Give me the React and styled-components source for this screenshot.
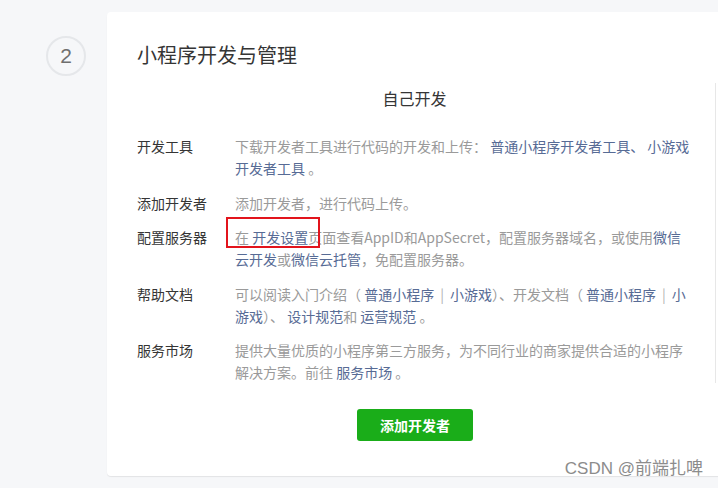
import styled, { createGlobalStyle } from 'styled-components';

const GlobalStyle = createGlobalStyle`
  html, body {
    margin: 0;
    padding: 0;
    background: #f6f7f9;
  }
  body {
    font-family: "Noto Sans CJK SC", "Liberation Sans", sans-serif;
    color: #353535;
  }
`;

const Page = styled.div`
  position: relative;
  display: flex;
  width: 718px;
  height: 488px;
  padding-top: 12px;
  box-sizing: border-box;
  overflow: hidden;
  background: #f6f7f9;
`;

//left step column
const StepCol = styled.div`
  flex: 0 0 107px;
  padding: 24px 0 0 46px;
  box-sizing: border-box;
`;
const StepCircle = styled.div`
  width: 40px;
  height: 40px;
  box-sizing: border-box;
  border: 2px solid #e5e7ea;
  border-radius: 50%;
  display: flex;
  align-items: center;
  justify-content: center;
  font-family: "Liberation Sans", sans-serif;
  font-size: 21px;
  color: #6f6f6f;
`;

//card
const Card = styled.div`
  flex: 0 0 680px;
  height: 464px;
  box-sizing: border-box;
  background: #fff;
  border-radius: 4px;
  box-shadow: 0 1px 1px rgba(0, 0, 0, 0.08);
  padding: 29px 0 0 7px;
`;
const CardTitle = styled.h2`
  margin: 0 0 14px;
  padding-left: 23px;
  font-size: 20px;
  line-height: 28px;
  font-weight: 400;
  color: #353535;
`;
const Section = styled.div`
  width: 602px;
  box-sizing: border-box;
  border-right: 1px solid #e7e7e7;
  padding: 3px 0 0 23px;
`;
const SectionTitle = styled.h3`
  margin: 0 0 25px;
  padding-right: 23px;
  text-align: center;
  font-size: 16px;
  line-height: 24px;
  font-weight: 400;
  color: #353535;
`;
const Row = styled.div`
  display: flex;
  font-size: 14px;
  line-height: 22px;
  & + & {
    margin-top: 12.5px;
  }
`;
const Label = styled.div`
  flex: 0 0 98px;
  color: #353535;
`;
const Desc = styled.div`
  position: relative;
  width: 458px;
  color: #9a9a9a;
`;
const Link = styled.a`
  color: #576b95;
  text-decoration: none;
`;
const Sep = styled.span`
  color: #b2b2b2;
  margin: 0 6px;
`;
// red annotation box
const Marker = styled.span`
  position: absolute;
  left: -9px;
  top: -9px;
  width: 94px;
  height: 31px;
  box-sizing: border-box;
  border: 2px solid #e2141c;
  pointer-events: none;
`;

const Footer = styled.div`
  width: 602px;
  padding-top: 26px;
  display: flex;
  justify-content: center;
`;
const PrimaryButton = styled.button`
  width: 116px;
  height: 32px;
  border: none;
  border-radius: 3px;
  background: #1aad19;
  color: #fff;
  font-family: "Noto Sans CJK SC", sans-serif;
  font-size: 14px;
  font-weight: 700;
  cursor: pointer;
`;

const Watermark = styled.div`
  position: absolute;
  right: 15px;
  bottom: 9px;
  font-family: "Liberation Sans", "Noto Sans CJK SC", sans-serif;
  font-size: 17px;
  line-height: 20px;
  color: #8c8c8c;
`;

function App() {
  return (
    <>
      <GlobalStyle />
      <Page>
        <StepCol>
          <StepCircle>2</StepCircle>
        </StepCol>
        <Card>
          <CardTitle>小程序开发与管理</CardTitle>
          <Section>
            <SectionTitle>自己开发</SectionTitle>
            <Row>
              <Label>开发工具</Label>
              <Desc>
                下载开发者工具进行代码的开发和上传： <Link>普通小程序开发者工具、</Link>{' '}
                <Link>小游戏开发者工具</Link> 。
              </Desc>
            </Row>
            <Row>
              <Label>添加开发者</Label>
              <Desc>添加开发者，进行代码上传。</Desc>
            </Row>
            <Row>
              <Label>配置服务器</Label>
              <Desc>
                在 <Link>开发设置</Link>页面查看AppID和AppSecret，配置服务器域名，或使用
                <Link>微信云开发</Link>或<Link>微信云托管</Link>，免配置服务器。
                <Marker />
              </Desc>
            </Row>
            <Row>
              <Label>帮助文档</Label>
              <Desc>
                可以阅读入门介绍（ <Link>普通小程序</Link>
                <Sep>|</Sep>
                <Link>小游戏</Link>）、开发文档（ <Link>普通小程序</Link>
                <Sep>|</Sep>
                <Link>小游戏</Link>）、 <Link>设计规范</Link>和 <Link>运营规范</Link> 。
              </Desc>
            </Row>
            <Row>
              <Label>服务市场</Label>
              <Desc>
                提供大量优质的小程序第三方服务，为不同行业的商家提供合适的小程序解决方案。前往{' '}
                <Link>服务市场</Link> 。
              </Desc>
            </Row>
          </Section>
          <Footer>
            <PrimaryButton>添加开发者</PrimaryButton>
          </Footer>
        </Card>
        <Watermark>CSDN @前端扎啤</Watermark>
      </Page>
    </>
  );
}

export default App;
